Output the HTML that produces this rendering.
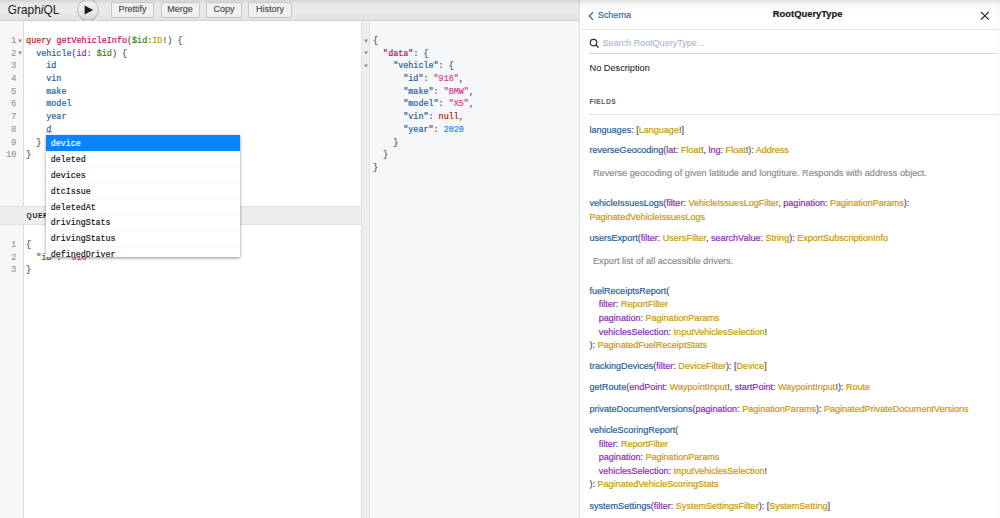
<!DOCTYPE html>
<html><head><meta charset="utf-8">
<style>
*{box-sizing:border-box;margin:0;padding:0}
html,body{width:1000px;height:518px;overflow:hidden;background:#fff;position:relative;font-family:"Liberation Sans",sans-serif}
.abs{position:absolute}
#topbar{left:0;top:0;width:580px;height:21px;background:linear-gradient(#f4f4f4,#e2e2e2);border-bottom:1px solid #d0d0d0}
#title{left:7.8px;top:2.3px;font-size:11.9px;line-height:17px;color:#22232b;white-space:nowrap;-webkit-text-stroke:0.05px currentColor}
#exec{left:76.9px;top:-1.3px;width:21.8px;height:21.8px;border-radius:50%;background:linear-gradient(#fdfdfd,#d8d9dc);border:1px solid rgba(0,0,0,0.16)}
.btn{top:2.4px;height:15.2px;border-radius:2px;background:linear-gradient(#f9f9f9,#ececec);box-shadow:inset 0 0 0 1px rgba(0,0,0,0.17),inset 0 1px #fff;color:#4a4a4a;font-size:9px;line-height:15.9px;text-align:center;white-space:nowrap;-webkit-text-stroke:0.15px currentColor}
/* query editor */
#qgut{left:0;top:21px;width:24px;height:185px;background:#f7f7f7;border-right:1px solid #ddd}
#vgut{left:0;top:225px;width:24px;height:293px;background:#f7f7f7;border-right:1px solid #ddd}
#vhead{left:0;top:206px;width:361px;height:19px;background:#eeeeee;border-top:1px solid #e0e0e0;border-bottom:1px solid #e0e0e0}
#vhead span{position:absolute;left:26.6px;top:4.3px;font-size:6.7px;font-weight:bold;letter-spacing:0.65px;color:#1a1a1a;line-height:9px}
.code{font-family:"Liberation Mono",monospace;font-size:8.42px;line-height:12.68px;white-space:pre;color:#141823;-webkit-text-stroke:0.2px currentColor}
.ln{font-family:"Liberation Mono",monospace;font-size:9px;letter-spacing:-0.4px;line-height:12.68px;white-space:pre;color:#999;text-align:right;width:16px;left:0;-webkit-text-stroke:0.15px currentColor}
.fold{color:#555;font-size:5px}
.kw{color:#B11A04}.def{color:#D2054E}.var{color:#397D13}.atom{color:#CA9800}.pun{color:#555}.prop{color:#1F61A0}.attr{color:#8B2BB9}.num{color:#2882F9}.str{color:#D64292}
/* results */
#rgut{left:361px;top:21px;width:9px;height:497px;background:#eeeeee;border-left:1px solid #e0e0e0;border-right:1px solid #e0e0e0}
#rbody{left:370px;top:21px;width:210px;height:497px;background:#f6f7f8}
/* hints */
#hints{left:46.3px;top:135px;width:194px;height:122px;background:#fff;overflow:hidden;box-shadow:0 1px 3px rgba(0,0,0,0.45)}
.hint{-webkit-text-stroke:0.2px currentColor;height:15.9px;border-top:1px solid #f6f6f6;font-family:"Liberation Mono",monospace;font-size:8.3px;line-height:16.3px;padding-left:4.5px;color:#141823;white-space:pre}
.hint.act{background:#0a84ff;background:#0784ff;color:#fff;border-top-color:#0784ff}
/* doc explorer */
#doc{left:579px;top:0;width:421px;height:518px;background:#fff;border-left:1px solid #e0e0e0}
#docshadow{left:0;top:0;width:1000px;height:9px;background:linear-gradient(rgba(0,0,0,0.14) 0px,rgba(0,0,0,0.09) 1.5px,rgba(0,0,0,0.03) 4px,rgba(0,0,0,0.02) 8.5px,rgba(0,0,0,0) 9px)}
.dt{font-size:9.04px;line-height:13.55px;white-space:nowrap;color:#555;-webkit-text-stroke:0.2px currentColor}
.fn{color:#1F61A0}.tn{color:#CA9800}.an{color:#8B2BB9}
.desc{color:#8e8e8e;font-size:9.18px}
</style></head><body>

<div id="topbar" class="abs"></div>
<div id="title" class="abs">Graph<i>i</i>QL</div>
<div id="exec" class="abs"><svg width="22" height="22" viewBox="0 0 22 22" style="position:absolute;left:-1px;top:-1px"><path d="M7.6 6.6 L16.1 11.05 L7.6 15.5 Z" fill="#1b1b22"/></svg></div>
<div class="btn abs" style="left:111.3px;width:42.3px">Prettify</div>
<div class="btn abs" style="left:160.5px;width:39px">Merge</div>
<div class="btn abs" style="left:206.4px;width:35.2px">Copy</div>
<div class="btn abs" style="left:248.4px;width:43.2px">History</div>

<!-- query editor -->
<div id="qgut" class="abs"></div>
<div class="abs ln" style="top:35px">1
2
3
4
5
6
7
8
9
10</div>
<div class="abs code" style="left:26.1px;top:35px"><span class="kw">query</span> <span class="def">getVehicleInfo</span><span class="pun">(</span><span class="var">$id</span><span class="pun">:</span><span class="atom">ID</span><span class="pun">!) {</span>
  <span class="prop">vehicle</span><span class="pun">(</span><span class="attr">id</span><span class="pun">:</span> <span class="var">$id</span><span class="pun">) {</span>
    <span class="prop">id</span>
    <span class="prop">vin</span>
    <span class="prop">make</span>
    <span class="prop">model</span>
    <span class="prop">year</span>
    <span class="prop">d</span>
  <span class="pun">}</span>
<span class="pun">}</span></div>

<div id="vhead" class="abs"><span>QUERY VARIABLES</span></div>
<div id="vgut" class="abs"></div>
<div class="abs ln" style="top:239px">1
2
3</div>
<div class="abs code" style="left:26.1px;top:239px"><span class="pun">{</span>
  <span class="var">"id"</span><span class="pun">:</span> <span class="str">"916"</span>
<span class="pun">}</span></div>

<!-- results -->
<div id="rgut" class="abs"></div>
<div id="rbody" class="abs"></div>
<div class="abs code" style="left:373px;top:35px"><span class="pun">{</span>
  <span class="def">"data"</span><span class="pun">: {</span>
    <span class="prop">"vehicle"</span><span class="pun">: {</span>
      <span class="prop">"id"</span><span class="pun">:</span> <span class="str">"916"</span><span class="pun">,</span>
      <span class="prop">"make"</span><span class="pun">:</span> <span class="str">"BMW"</span><span class="pun">,</span>
      <span class="prop">"model"</span><span class="pun">:</span> <span class="str">"X5"</span><span class="pun">,</span>
      <span class="prop">"vin"</span><span class="pun">:</span> <span class="kw">null</span><span class="pun">,</span>
      <span class="prop">"year"</span><span class="pun">:</span> <span class="num">2020</span>
    <span class="pun">}</span>
  <span class="pun">}</span>
<span class="pun">}</span></div>


<svg class="abs" style="left:18px;top:38.5px" width="6" height="5"><path d="M0.2 0.6 L4 0.6 L2.1 3.8 Z" fill="#8a8a8a"/></svg>
<svg class="abs" style="left:18px;top:51.2px" width="6" height="5"><path d="M0.2 0.6 L4 0.6 L2.1 3.8 Z" fill="#8a8a8a"/></svg>
<svg class="abs" style="left:363.5px;top:38.5px" width="5" height="5"><path d="M0.2 0.5 L3.9 0.5 L2.05 3.8 Z" fill="#8a8a8a"/></svg>
<svg class="abs" style="left:363.5px;top:51.2px" width="5" height="5"><path d="M0.2 0.5 L3.9 0.5 L2.05 3.8 Z" fill="#8a8a8a"/></svg>
<svg class="abs" style="left:363.5px;top:63.9px" width="5" height="5"><path d="M0.2 0.5 L3.9 0.5 L2.05 3.8 Z" fill="#8a8a8a"/></svg>
<svg class="abs" style="left:46px;top:130.2px" width="7" height="4"><path d="M0.3 3 L1.7 1 L3.2 3 L4.7 1 L6.2 3" fill="none" stroke="#e8507a" stroke-width="0.8"/></svg>
<!-- hints -->
<div id="hints" class="abs">
<div class="hint act">device</div>
<div class="hint">deleted</div>
<div class="hint">devices</div>
<div class="hint">dtcIssue</div>
<div class="hint">deletedAt</div>
<div class="hint">drivingStats</div>
<div class="hint">drivingStatus</div>
<div class="hint">definedDriver</div>
</div>

<!-- doc explorer -->
<div id="doc" class="abs"></div>

<div class="abs" style="left:581px;top:29px;width:417px;height:1px;background:#e0e0e0"></div>
<svg class="abs" style="left:587px;top:11px" width="8" height="10" viewBox="0 0 8 10"><path d="M6 1.3 L2.3 5 L6 8.7" fill="none" stroke="#3b64a0" stroke-width="1.25"/></svg>
<div class="abs dt" style="left:597.8px;top:8.6px;color:#3a65a8">Schema</div>
<div class="abs dt" style="left:772.8px;top:7.3px;font-size:9.4px;font-weight:bold;color:#141823">RootQueryType</div>
<svg class="abs" style="left:979px;top:10px" width="12" height="12" viewBox="0 0 12 12"><path d="M1.9 1.9 L9.8 9.6 M9.8 1.9 L1.9 9.6" fill="none" stroke="#1a1a22" stroke-width="1.15"/></svg>
<svg class="abs" style="left:588px;top:38px" width="12" height="11" viewBox="0 0 12 11"><circle cx="5.5" cy="4.6" r="3.25" fill="none" stroke="#2a2a30" stroke-width="1.15"/><path d="M7.9 7 L10.6 9.6" stroke="#2a2a30" stroke-width="1.3"/></svg>
<div class="abs dt" style="left:602.4px;top:36.5px;color:#a3b3c9;-webkit-text-stroke:0.05px currentColor">Search RootQueryType...</div>
<div class="abs" style="left:589px;top:53px;width:409px;height:1px;background:#d3d6db"></div>
<div class="abs dt" style="left:589.5px;top:62.4px;font-size:9.2px;color:#22232b;-webkit-text-stroke:0.05px currentColor">No Description</div>
<div class="abs" style="left:589.4px;top:97.4px;font-size:6.7px;line-height:10px;font-weight:bold;letter-spacing:0.5px;color:#555">FIELDS</div>
<div class="abs" style="left:589px;top:114px;width:409px;height:1px;background:#e0e0e0"></div>
<div class="abs" style="left:998px;top:0;width:2px;height:518px;background:#fff;border-left:1px solid #f5f5f5"></div>
<div class="abs dt" style="left:589.5px;top:123.7px"><span class="fn">languages</span>: [<span class="tn">Language</span>!]</div>
<div class="abs dt" style="left:589.5px;top:144.3px"><span class="fn">reverseGeocoding</span>(<span class="an">lat</span>: <span class="tn">Float</span>!, <span class="an">lng</span>: <span class="tn">Float</span>!): <span class="tn">Address</span></div>
<div class="abs dt" style="left:593.0px;top:167.0px"><span class="desc">Reverse geocoding of given latitude and longtiture. Responds with address object.</span></div>
<div class="abs dt" style="left:589.5px;top:197.4px"><span class="fn">vehicleIssuesLogs</span>(<span class="an">filter</span>: <span class="tn">VehicleIssuesLogFilter</span>, <span class="an">pagination</span>: <span class="tn">PaginationParams</span>):</div>
<div class="abs dt" style="left:589.5px;top:211.0px"><span class="tn">PaginatedVehicleIssuesLogs</span></div>
<div class="abs dt" style="left:589.5px;top:231.5px"><span class="fn">usersExport</span>(<span class="an">filter</span>: <span class="tn">UsersFilter</span>, <span class="an">searchValue</span>: <span class="tn">String</span>): <span class="tn">ExportSubscriptionInfo</span></div>
<div class="abs dt" style="left:593.0px;top:254.8px"><span class="desc">Export list of all accessible drivers.</span></div>
<div class="abs dt" style="left:589.5px;top:284.9px"><span class="fn">fuelReceiptsReport</span>(</div>
<div class="abs dt" style="left:598.8px;top:298.2px"><span class="an">filter</span>: <span class="tn">ReportFilter</span></div>
<div class="abs dt" style="left:598.8px;top:312.0px"><span class="an">pagination</span>: <span class="tn">PaginationParams</span></div>
<div class="abs dt" style="left:598.8px;top:325.5px"><span class="an">vehiclesSelection</span>: <span class="tn">InputVehiclesSelection</span>!</div>
<div class="abs dt" style="left:589.5px;top:338.9px">): <span class="tn">PaginatedFuelReceiptStats</span></div>
<div class="abs dt" style="left:589.5px;top:360.1px"><span class="fn">trackingDevices</span>(<span class="an">filter</span>: <span class="tn">DeviceFilter</span>): [<span class="tn">Device</span>]</div>
<div class="abs dt" style="left:589.5px;top:381.2px"><span class="fn">getRoute</span>(<span class="an">endPoint</span>: <span class="tn">WaypointInput</span>!, <span class="an">startPoint</span>: <span class="tn">WaypointInput</span>!): <span class="tn">Route</span></div>
<div class="abs dt" style="left:589.5px;top:402.6px"><span class="fn">privateDocumentVersions</span>(<span class="an">pagination</span>: <span class="tn">PaginationParams</span>): <span class="tn">PaginatedPrivateDocumentVersions</span></div>
<div class="abs dt" style="left:589.5px;top:423.9px"><span class="fn">vehicleScoringReport</span>(</div>
<div class="abs dt" style="left:598.8px;top:437.8px"><span class="an">filter</span>: <span class="tn">ReportFilter</span></div>
<div class="abs dt" style="left:598.8px;top:451.3px"><span class="an">pagination</span>: <span class="tn">PaginationParams</span></div>
<div class="abs dt" style="left:598.8px;top:464.9px"><span class="an">vehiclesSelection</span>: <span class="tn">InputVehiclesSelection</span>!</div>
<div class="abs dt" style="left:589.5px;top:478.1px">): <span class="tn">PaginatedVehicleScoringStats</span></div>
<div class="abs dt" style="left:589.5px;top:499.5px"><span class="fn">systemSettings</span>(<span class="an">filter</span>: <span class="tn">SystemSettingsFilter</span>): [<span class="tn">SystemSetting</span>]</div>
<div id="docshadow" class="abs"></div>

</body></html>
